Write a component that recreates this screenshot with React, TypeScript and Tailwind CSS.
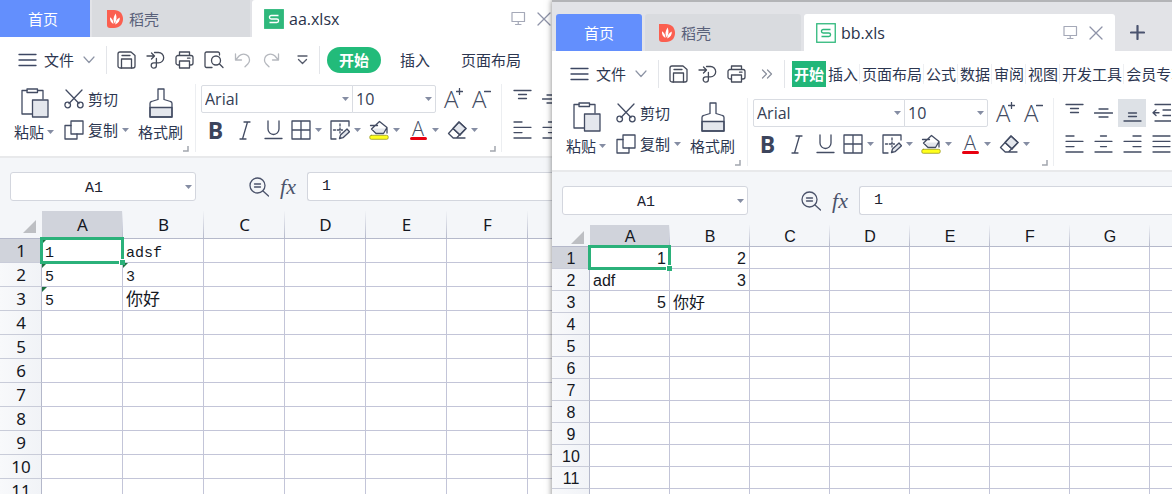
import React from "react";

type Column = { label: string; width?: string };
type Cell = { value: string; flagged?: boolean; alignRight?: boolean; large?: boolean };

const uiFont = "font-['Open_Sans','Noto_Sans_CJK_SC',sans-serif]";
const monoFont = "font-['Liberation_Mono','Noto_Sans_CJK_SC',monospace]";

type IconProps = {
  w: number;
  h: number;
  children: React.ReactNode;
  className?: string;
};

function Icon({ w, h, children, className = "" }: IconProps) {
  return (
    <svg
      width={w}
      height={h}
      viewBox={`0 0 ${w} ${h}`}
      fill="none"
      stroke="currentColor"
      strokeWidth="1.3"
      strokeLinecap="round"
      strokeLinejoin="round"
      className={`shrink-0 ${className}`}
      aria-hidden="true"
    >
      {children}
    </svg>
  );
}

function Caret({ className = "" }: { className?: string }) {
  return (
    <svg width="7" height="4" viewBox="0 0 7 4" className={`shrink-0 fill-[#858da3] ${className}`} aria-hidden="true">
      <path d="M0 0h7L3.500 4z" />
    </svg>
  );
}

function Corner({ className }: { className: string }) {
  return (
    <svg width="7" height="7" viewBox="0 0 7 7" className={`absolute ${className}`} aria-hidden="true">
      <path d="M6 1v5H1" fill="none" stroke="#a2a6ae" strokeWidth="1.5" />
    </svg>
  );
}

function DocerLogo() {
  return (
    <svg width="16" height="18" viewBox="0 0 16 18" className="shrink-0" aria-hidden="true">
      <path d="M0 0h7c5.500 0 9 3.800 9 9s-3.500 9-9 9H3a3 3 0 0 1-3-3z" fill="#fb5f50" />
      <path d="M7.600 13.500C5.800 10.500 6.200 7.200 8.600 3.500c1.500 3.700 1.100 7.200-1 10z" fill="#fff" />
      <path d="M6.500 14C3.700 12.500 2.700 10 3 7.200c2.200 1.500 3.500 3.800 3.500 6.800z" fill="#fff" />
      <path d="M8.200 14.500c.2-3.300 1.700-5.700 4.600-7 .2 3.200-1.300 5.700-4.600 7z" fill="#fff" />
    </svg>
  );
}

function SheetLogo({ outlined }: { outlined: boolean }) {
  return (
    <svg width="20" height="20" viewBox="0 0 20 20" className="shrink-0" aria-hidden="true">
      <rect
        x="0.750"
        y="0.750"
        width="18.500"
        height="18.500"
        fill={outlined ? "#fff" : "#2fb87c"}
        stroke="#2fb87c"
        strokeWidth="1.300"
      />
      <path
        d="M14.500 6.500H7.200a1.750 1.750 0 0 0 0 3.500h5.600a1.750 1.750 0 0 1 0 3.500H5.500"
        fill="none"
        stroke={outlined ? "#2fb87c" : "#fff"}
        strokeWidth="1.400"
      />
    </svg>
  );
}

function TabBar({ file, outlined, inset }: { file: string; outlined: boolean; inset: boolean }) {
  return (
    <div className={`flex h-[37px] text-[15px] leading-5 ${inset ? "gap-[3px] pl-1" : "gap-[2px]"}`}>
      <button
        type="button"
        className={`shrink-0 bg-[#638ffd] text-white ${inset ? "w-[86px] rounded-t-[3px]" : "w-[90px] pr-1"}`}
      >
        首页
      </button>
      <button
        type="button"
        className={`flex shrink-0 items-center gap-[6px] bg-[#d9dbdf] text-[#59617a] ${
          inset ? "w-[156px] rounded-t-[3px] pl-[14px]" : "w-[158px] pl-[15px]"
        }`}
      >
        <DocerLogo />
        稻壳
      </button>
      <div className="flex w-[311px] shrink-0 items-center rounded-t-[3px] bg-white pr-3 pl-3 text-[#29324a]">
        <SheetLogo outlined={outlined} />
        <span className="ml-[5px] text-[16px]">{file}</span>
        <button type="button" aria-label="预览窗口" className="ml-auto text-[#a5a9b8]">
          <Icon w={16} h={15}>
            <path d="M1 1.500h12.500v9H1zM7.250 10.500v3M4.500 13.500H10" strokeWidth="1.200" />
          </Icon>
        </button>
        <button type="button" aria-label="关闭" className="ml-[10px] text-[#8e93a8]">
          <Icon w={14} h={14}>
            <path d="M1 1l12 12M13 1L1 13" strokeWidth="1.300" />
          </Icon>
        </button>
      </div>
      {inset && (
        <button type="button" aria-label="新建" className="ml-3 shrink-0 text-[#4a536f]">
          <Icon w={15} h={15}>
            <path d="M7.500 1v13M1 7.500h13" strokeWidth="2.200" />
          </Icon>
        </button>
      )}
    </div>
  );
}

function SaveIcon() {
  return (
    <Icon w={19} h={18}>
      <path d="M3 1h11l4 3.500V15a2 2 0 0 1-2 2H3a2 2 0 0 1-2-2V3a2 2 0 0 1 2-2z" />
      <path d="M4.500 17V8h10v9M5 4.500h8" />
    </Icon>
  );
}

function ExportIcon() {
  return (
    <Icon w={19} h={18}>
      <path d="M1 5h7M5.500 2l3 3-3 3" />
      <path d="M8.500 1.500h4a5.200 5.200 0 0 1 0 10.400H7.800a2.600 2.600 0 1 0 2.600 2.600V7.500" />
    </Icon>
  );
}

function PrinterIcon() {
  return (
    <Icon w={19} h={18}>
      <path d="M4.500 4.500V1h10v3.500M4.500 14H3a2 2 0 0 1-2-2V6.500a2 2 0 0 1 2-2h13a2 2 0 0 1 2 2V12a2 2 0 0 1-2 2h-1.500" />
      <path d="M4.500 10h10v7h-10zM12.500 7.200h2.500" />
    </Icon>
  );
}

function PreviewIcon() {
  return (
    <Icon w={20} h={18}>
      <path d="M8 16.500H2.500A1.500 1.500 0 0 1 1 15V2.500A1.500 1.500 0 0 1 2.500 1H14a1.500 1.500 0 0 1 1.500 1.500V4" />
      <circle cx="12" cy="9.500" r="4.500" />
      <path d="M15.300 12.800l3.700 3.700" />
    </Icon>
  );
}

function MenuButton({ label, children }: { label: string; children: React.ReactNode }) {
  return (
    <button type="button" aria-label={label} className="shrink-0">
      {children}
    </button>
  );
}

const wideTabs = ["插入", "页面布局"];
const compactTabs = ["插入", "页面布局", "公式", "数据", "审阅", "视图", "开发工具", "会员专享"];

function MenuBar({ compact }: { compact: boolean }) {
  return (
    <div className="flex h-[47px] items-center overflow-hidden pb-[2px] pl-[18px] text-[15px] leading-5 whitespace-nowrap text-[#2c3650]">
      <button type="button" className="flex shrink-0 items-center">
        <Icon w={19} h={14} className="text-[#3d4763]">
          <path d="M1 1.500h17M1 7h17M1 12.500h17" />
        </Icon>
        <span className="ml-[7px]">文件</span>
        <Icon w={12} h={8} className="ml-[9px] text-[#8d94a5]">
          <path d="M1 1l5 5.500L11 1" strokeWidth="1.200" />
        </Icon>
      </button>
      <div className="ml-[11px] flex h-7 shrink-0 items-center gap-[10px] border-l border-[#e3e5e9] pl-[10px] text-[#454b5a]">
        <MenuButton label="保存"><SaveIcon /></MenuButton>
        <MenuButton label="输出"><ExportIcon /></MenuButton>
        <MenuButton label="打印"><PrinterIcon /></MenuButton>
        {!compact && (
          <>
            <MenuButton label="打印预览"><PreviewIcon /></MenuButton>
            <button type="button" aria-label="撤销" className="shrink-0 text-[#b5b8be]">
              <Icon w={18} h={16}>
                <path d="M1.500 2v6h6M1.500 8l3.800-4.200a6 6 0 0 1 8.500 0 5.700 5.700 0 0 1 0 8.200L11 14.800" />
              </Icon>
            </button>
            <button type="button" aria-label="恢复" className="shrink-0 text-[#b5b8be]">
              <Icon w={18} h={16}>
                <path d="M16.500 2v6h-6M16.500 8l-3.800-4.200a6 6 0 0 0-8.500 0 5.700 5.700 0 0 0 0 8.200L7 14.800" />
              </Icon>
            </button>
          </>
        )}
      </div>
      {compact ? (
        <button type="button" aria-label="更多命令" className="ml-[15px] shrink-0 text-[#8a8f9c]">
          <Icon w={12} h={10}>
            <path d="M1.500 1l4 4-4 4M6.500 1l4 4-4 4" strokeWidth="1.200" />
          </Icon>
        </button>
      ) : (
        <button type="button" aria-label="自定义快速访问" className="ml-[17px] shrink-0 text-[#555b6b]">
          <Icon w={11} h={10}>
            <path d="M1 1h9M1.500 4.500l4 4 4-4" strokeWidth="1.300" />
          </Icon>
        </button>
      )}
      {compact ? (
        <nav className="ml-[11px] flex h-7 shrink-0 items-center border-l border-[#e3e5e9] pl-[7px]">
          <button type="button" className="h-[26px] w-[34px] bg-[#22b679] font-bold text-white">
            开始
          </button>
          {compactTabs.map((tab) => (
            <button type="button" key={tab} className="border-r border-[#eeeff2] pr-px pl-[2px]">
              {tab}
            </button>
          ))}
        </nav>
      ) : (
        <nav className="ml-[11px] flex h-7 shrink-0 items-center border-l border-[#e3e5e9] pl-[7px]">
          <button type="button" className="h-[26px] w-[54px] rounded-full bg-[#22bb7a] font-bold text-white">
            开始
          </button>
          <div className="ml-[19px] flex gap-[31px]">
            {wideTabs.map((tab) => (
              <button type="button" key={tab}>{tab}</button>
            ))}
          </div>
        </nav>
      )}
    </div>
  );
}

function ClipboardGroup() {
  return (
    <section aria-label="剪贴板" className="relative flex h-[68px] w-[196px] shrink-0 border-r border-[#eceef1] pl-[14px] text-[15px] leading-[18px]">
      <button type="button" className="flex w-10 shrink-0 flex-col pt-1 whitespace-nowrap">
        <Icon w={28} h={30} className="ml-[7px] text-[#434c63]">
          <path d="M6 2.500H1v23.500h10M16.500 2.500H22V11" />
          <path d="M6 1h10.500v3.500H6z" />
          <path d="M11.500 12H27v17H11.500z" fill="#e4e7ed" />
        </Icon>
        <span className="mt-[5px] flex items-center gap-[3px]">
          粘贴
          <Caret />
        </span>
      </button>
      <div className="ml-[10px] flex shrink-0 flex-col gap-[11px] pt-[5px]">
        <button type="button" className="flex h-5 items-center gap-1">
          <Icon w={20} h={20} className="text-[#434c63]">
            <path d="M2 1l13 13.500M18 1L5 14.500" />
            <circle cx="3.700" cy="16" r="2.800" />
            <circle cx="16.300" cy="16" r="2.800" />
          </Icon>
          剪切
        </button>
        <button type="button" className="flex h-5 items-center gap-1">
          <Icon w={20} h={20} className="text-[#434c63]">
            <path d="M7 1h12v13H7z" />
            <path d="M7 5.500H1V19h12v-5" />
          </Icon>
          复制
          <Caret />
        </button>
      </div>
      <button type="button" className="ml-[9px] flex shrink-0 flex-col items-center pt-1">
        <Icon w={24} h={30} className="text-[#434c63]">
          <path d="M1 19.500h22V29H1z" fill="#e4e7ed" />
          <path d="M9 1h6v10.500l6.500 2a2 2 0 0 1 1.500 2V29H1V15.500a2 2 0 0 1 1.500-2l6.500-2z" />
        </Icon>
        <span className="mt-[5px]">格式刷</span>
      </button>
      <Corner className="right-[6px] bottom-0" />
    </section>
  );
}

function ToolButton({ label, children }: { label: string; children: React.ReactNode }) {
  return (
    <button type="button" aria-label={label} className="flex w-[39px] shrink-0 items-center gap-1 pl-[3px]">
      {children}
      <Caret />
    </button>
  );
}

function FontGroup() {
  return (
    <section aria-label="字体" className="relative flex h-[68px] w-[306px] shrink-0 flex-col gap-[7px] border-r border-[#eceef1] pt-px pl-[5px] text-[#434c63]">
      <div className="flex h-7">
        <div className="relative w-[152px]">
          <select aria-label="字体名称" className="h-7 w-full appearance-none rounded-l-[2px] border border-[#d9dce2] bg-white pl-[3px] text-[16px] leading-6 text-[#353e55]">
            <option>Arial</option>
          </select>
          <Caret className="pointer-events-none absolute top-3 right-1" />
        </div>
        <div className="relative -ml-px w-[84px]">
          <select aria-label="字号" className="h-7 w-full appearance-none rounded-r-[2px] border border-[#d9dce2] bg-white pl-[3px] text-[16px] leading-6 text-[#353e55]">
            <option>10</option>
          </select>
          <Caret className="pointer-events-none absolute top-3 right-1" />
        </div>
        <button type="button" aria-label="增大字号" className="ml-2 flex w-5 items-start">
          <span className="text-[24px] leading-7 font-light">A</span>
          <Icon w={7} h={7} className="-ml-[2px] mt-[3px]">
            <path d="M3.500 0.500v6M0.500 3.500h6" strokeWidth="1.300" />
          </Icon>
        </button>
        <button type="button" aria-label="减小字号" className="ml-2 flex w-5 items-start">
          <span className="text-[24px] leading-7 font-light">A</span>
          <Icon w={7} h={7} className="-ml-[2px] mt-[3px]">
            <path d="M0.500 3.500h6" strokeWidth="1.300" />
          </Icon>
        </button>
      </div>
      <div className="flex h-5 items-center">
        <button type="button" aria-label="加粗" className="w-[29px] text-[23px] leading-5 font-bold text-[#3c445c]">B</button>
        <button type="button" aria-label="倾斜" className="flex w-[29px] justify-center">
          <Icon w={12} h={19}>
            <path d="M5 1h6M1 18h6M8.500 1l-5 17" />
          </Icon>
        </button>
        <button type="button" aria-label="下划线" className="flex w-[29px] justify-center">
          <Icon w={19} h={20}>
            <path d="M4 1v8a5.500 5.500 0 0 0 11 0V1M1 18.500h17" />
          </Icon>
        </button>
        <ToolButton label="边框">
          <Icon w={20} h={20}>
            <path d="M1 1h18v18H1zM10 1v18M1 10h18" />
          </Icon>
        </ToolButton>
        <ToolButton label="单元格样式">
          <Icon w={20} h={20}>
            <path d="M19 6V1H1v18h5" />
            <path d="M3.500 10h9M10 4v9" strokeDasharray="2 1.800" />
            <path d="M9.500 18.500l1-3.500 6.500-6 2.500 2.700-6.500 6z" fill="#e4e7ed" />
          </Icon>
        </ToolButton>
        <ToolButton label="填充颜色">
          <Icon w={20} h={20}>
            <path d="M4.500 8.500h13l-3 5h-7z" fill="#e4e7ed" stroke="none" />
            <path d="M10.500 1.500L18 7.500l-3.500 6H7L2.500 9zM1.500 5.500h7M18 7.500v5.500" />
            <rect x="0.800" y="15.300" width="18.400" height="4" rx="1.500" fill="#ffff1c" stroke="#9a9a20" strokeWidth="0.800" />
          </Icon>
        </ToolButton>
        <ToolButton label="字体颜色">
          <span className="flex w-5 shrink-0 flex-col items-center">
            <span className="text-[20px] leading-[17px] font-light">A</span>
            <span className="h-[3px] w-[17px] rounded-full bg-[#e80010]" />
          </span>
        </ToolButton>
        <ToolButton label="清除">
          <Icon w={20} h={20}>
            <path d="M12 2l7 6.500-6 6.500-7-6.500z" fill="#e4e7ed" />
            <path d="M12 2l7 6.500L9.500 18H6.200L1.500 13.500zM6 8.500l7 6.500M9.500 18H18" />
          </Icon>
        </ToolButton>
      </div>
      <Corner className="right-[5px] bottom-0" />
    </section>
  );
}

const alignTools = [
  [
    { label: "顶端对齐", d: "M1 1.500h17M5.500 5.500h8M5.500 9.500h8" },
    { label: "垂直居中", d: "M5 6h9M0.500 10h18M5 14h9" },
    { label: "底端对齐", d: "M5.500 10h8M5.500 13.500h8M1 18h17", active: true },
    { label: "减少缩进", d: "M3 1.500h16M11 7h8M11 12.500h8M3 18h16M1 9.750h6M4 7l-3 2.750 3 2.750" },
  ],
  [
    { label: "左对齐", d: "M1 2h8M1 7.300h17M1 12.600h8M1 18h17" },
    { label: "水平居中", d: "M6.500 2h6M1 7.300h17M6.500 12.600h6M1 18h17" },
    { label: "右对齐", d: "M10 2h8M1 7.300h17M10 12.600h8M1 18h17" },
    { label: "两端对齐", d: "M1 2h17M1 7.300h17M1 12.600h17M1 18h17" },
  ],
];

function AlignGroup() {
  return (
    <section aria-label="对齐方式" className="flex shrink-0 flex-col gap-[7px] pt-px pl-[6px] text-[#434c63]">
      {alignTools.map((row, index) => (
        <div key={index} className="flex gap-px">
          {row.map((tool) => (
            <button
              type="button"
              key={tool.label}
              aria-label={tool.label}
              className={`flex w-7 items-center justify-center ${index === 0 ? "h-7" : "h-5"} ${
                "active" in tool ? "bg-[#dde1e6]" : ""
              }`}
            >
              <Icon w={19} h={20}>
                <path d={tool.d} />
              </Icon>
            </button>
          ))}
        </div>
      ))}
    </section>
  );
}

function FormulaBar() {
  return (
    <div className="flex border-t-2 border-[#e8e9eb] pt-[14px] pb-[10px] pl-[10px] text-[15px] leading-5 text-[#1d2230]">
      <div className="relative w-[186px] shrink-0">
        <input
          aria-label="名称框"
          defaultValue="A1"
          className={`${monoFont} h-[29px] w-full rounded-[3px] border border-[#d3d6de] bg-white pt-[3px] pr-[18px] text-center`}
        />
        <Caret className="pointer-events-none absolute top-[13px] right-1" />
      </div>
      <button type="button" aria-label="浏览公式结果" className="ml-[53px] shrink-0 text-[#4b536b]">
        <Icon w={20} h={20}>
          <circle cx="8.500" cy="8.500" r="7.500" />
          <path d="M14 14l5.500 5M5.500 7h6M5.500 10h6" />
        </Icon>
      </button>
      <button
        type="button"
        aria-label="插入函数"
        className="w-[38px] shrink-0 font-['Liberation_Serif',serif] text-[22px] leading-6 text-[#4b536b] italic"
      >
        fx
      </button>
      <input
        aria-label="编辑栏"
        defaultValue="1"
        className={`${monoFont} h-[29px] min-w-0 flex-1 rounded-l-[3px] border border-r-0 border-[#d3d6de] bg-white pl-[14px]`}
      />
    </div>
  );
}

type SheetProps = {
  columns: Column[];
  stubWidth: string;
  headHeight: string;
  rowHeight: string;
  headFont: string;
  cellFont: string;
  rowLabels: string[];
  cells: Record<string, Cell>;
};

function Sheet({ columns, stubWidth, headHeight, rowHeight, headFont, cellFont, rowLabels, cells }: SheetProps) {
  return (
    <table className="w-full table-fixed border-separate border-spacing-0 text-[#15181f]">
      <thead>
        <tr className={headHeight}>
          <td className={`${stubWidth} border-b border-[#b4b8ca] p-0`}>
            <svg width="13" height="13" viewBox="0 0 13 13" className="mt-1 mr-[6px] ml-auto block" aria-hidden="true">
              <path d="M13 0v13H0z" fill="#bdbfc3" />
            </svg>
          </td>
          {columns.map((col, i) => (
            <th
              key={i}
              scope="col"
              className={`${headFont} ${col.width ?? ""} border-b border-[#b4b8ca] pr-0 pb-0 pl-px font-normal ${
                i === 0 ? "bg-[#d0d3db]" : ""
              } ${
                i < columns.length - 1
                  ? "border-r [border-image:linear-gradient(to_bottom,#f4f6f9,#b4b8ca)_1]"
                  : ""
              }`}
            >
              {col.label}
            </th>
          ))}
        </tr>
      </thead>
      <tbody>
        {rowLabels.map((row, rowIndex) => (
          <tr key={rowIndex} className={rowHeight}>
            <th
              scope="row"
              className={`${headFont} border-r border-b border-r-[#b4b8ca] border-b-[#c9ccd9] pr-0 pb-0 pl-px font-normal ${
                rowIndex === 0 ? "bg-[#d0d3db]" : "bg-linear-to-r from-[#f8f9fb] to-[#f1f3f7]"
              }`}
            >
              {row}
            </th>
            {columns.map((col, i) => {
              const cell = cells[`${col.label}${row}`];
              const selected = i === 0 && rowIndex === 0;
              return (
                <td
                  key={i}
                  className={`relative border-b border-[#c3c5d8] bg-white px-[3px] pb-0 whitespace-nowrap ${cellFont} ${
                    i < columns.length - 1 ? "border-r" : ""
                  } ${cell?.alignRight ? "text-right" : "text-left"}`}
                >
                  {cell?.large ? <span className="text-[17px]">{cell.value}</span> : cell?.value}
                  {cell?.flagged && (
                    <svg width="5" height="5" viewBox="0 0 5 5" className="absolute top-0 left-0" aria-hidden="true">
                      <path d="M0 0h5L0 5z" fill="#1d7040" />
                    </svg>
                  )}
                  {selected && (
                    <>
                      <span className="absolute -inset-[2px] z-10 border-[3px] border-[#2bb17a]" />
                      <span className="absolute -right-[3px] -bottom-[3px] z-10 size-[6px] border-t border-l border-white bg-[#2bb17a]" />
                    </>
                  )}
                </td>
              );
            })}
          </tr>
        ))}
      </tbody>
    </table>
  );
}

const leftColumns: Column[] = [
  ...["A", "B", "C", "D", "E", "F"].map((label) => ({ label, width: "w-[81px]" })),
  { label: "" },
];

const rightColumns: Column[] = [
  ...["A", "B", "C", "D", "E", "F", "G"].map((label) => ({ label, width: "w-[80px]" })),
  { label: "" },
];

const rowNumbers = ["1", "2", "3", "4", "5", "6", "7", "8", "9", "10", "11"];

const leftCells: Record<string, Cell> = {
  A1: { value: "1", flagged: true },
  B1: { value: "adsf" },
  A2: { value: "5", flagged: true },
  B2: { value: "3", flagged: true },
  A3: { value: "5", flagged: true },
  B3: { value: "你好", large: true },
};

const rightCells: Record<string, Cell> = {
  A1: { value: "1", alignRight: true },
  B1: { value: "2", alignRight: true },
  A2: { value: "adf" },
  B2: { value: "3", alignRight: true },
  A3: { value: "5", alignRight: true },
  B3: { value: "你好" },
};

type WindowProps = {
  file: string;
  compact: boolean;
  className: string;
  children: React.ReactNode;
};

function SpreadsheetWindow({ file, compact, className, children }: WindowProps) {
  return (
    <section aria-label={file} className={`min-w-0 bg-[#f4f6f9] ${className}`}>
      <div className="overflow-hidden">
        <header className={`bg-[#e2e3e7] ${compact ? "border-t-2 border-[#b3b4b7] pt-3" : ""}`}>
          <TabBar file={file} outlined={compact} inset={compact} />
        </header>
        <div className="bg-white">
          <MenuBar compact={compact} />
          <div className="flex h-[72px] overflow-hidden text-[#2c3650]">
            <ClipboardGroup />
            <FontGroup />
            <AlignGroup />
          </div>
        </div>
        <FormulaBar />
        {children}
      </div>
    </section>
  );
}

export default function App() {
  return (
    <main className={`grid h-screen grid-cols-[552fr_620fr] overflow-hidden bg-[#f4f6f9] ${uiFont}`}>
      <SpreadsheetWindow file="aa.xlsx" compact={false} className="">
        <Sheet
          columns={leftColumns}
          stubWidth="w-[42px]"
          headHeight="h-[28px]"
          rowHeight="h-[24px]"
          headFont="font-['Noto_Sans',sans-serif] text-[17px] leading-5 pt-px"
          cellFont="font-['Liberation_Mono','Noto_Sans_CJK_SC',monospace] text-[15px] leading-4 pt-[6px]"
          rowLabels={rowNumbers}
          cells={leftCells}
        />
      </SpreadsheetWindow>
      <SpreadsheetWindow file="bb.xls" compact className="relative shadow-[0_0_6px_rgba(0,0,0,0.5)]">
        <Sheet
          columns={rightColumns}
          stubWidth="w-[38px]"
          headHeight="h-[22px]"
          rowHeight="h-[22px]"
          headFont="font-['Liberation_Sans',sans-serif] text-[16px] leading-[18px] pt-[3px]"
          cellFont="font-['Liberation_Sans','Noto_Sans_CJK_SC',sans-serif] text-[16px] leading-[18px] pt-[3px]"
          rowLabels={[...rowNumbers, ""]}
          cells={rightCells}
        />
      </SpreadsheetWindow>
    </main>
  );
}
